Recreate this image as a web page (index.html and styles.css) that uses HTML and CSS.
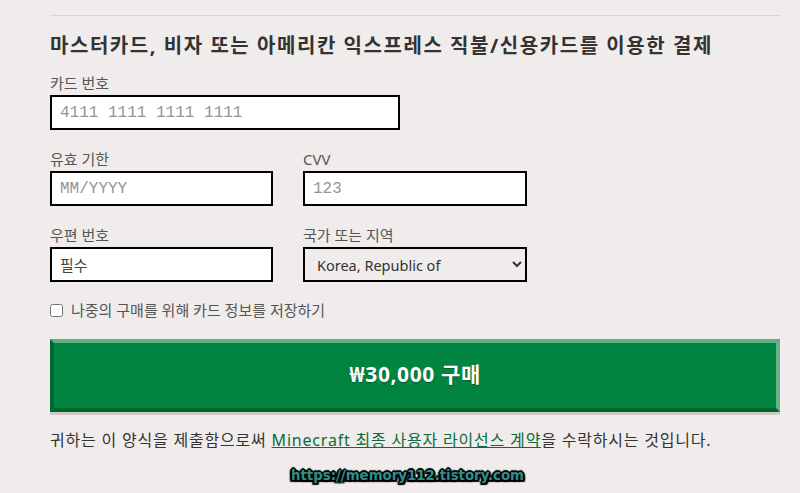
FILE: index.html
```html
<!DOCTYPE html>
<html lang="ko">
<head>
<meta charset="utf-8">
<link rel="stylesheet" href="styles.css">
</head>
<body>
<div class="page">
  <div class="panel">
    <h2 class="title">마스터카드, 비자 또는 아메리칸 익스프레스 직불/신용카드를 이용한 결제</h2>
    <div class="field wide">
      <label class="label">카드 번호</label>
      <input class="input mono" type="text" placeholder="4111 1111 1111 1111">
    </div>
    <div class="row">
      <div class="field">
        <label class="label">유효 기한</label>
        <input class="input mono" type="text" placeholder="MM/YYYY">
      </div>
      <div class="field">
        <label class="label">CVV</label>
        <input class="input mono" type="text" placeholder="123">
      </div>
    </div>
    <div class="row">
      <div class="field">
        <label class="label">우편 번호</label>
        <input class="input dark" type="text" placeholder="필수">
      </div>
      <div class="field">
        <label class="label">국가 또는 지역</label>
        <select class="input select"><option>Korea, Republic of</option></select>
      </div>
    </div>
    <label class="save"><input type="checkbox" class="check"><span>나중의 구매를 위해 카드 정보를 저장하기</span></label>
    <button class="buy">₩30,000 구매</button>
    <p class="terms">귀하는 이 양식을 제출함으로써 <a href="#" class="link">Minecraft 최종 사용자 라이선스 계약</a>을 수락하시는 것입니다.</p>
  </div>
  <div class="watermark">https://memory112.tistory.com</div>
</div>
</body>
</html>
```

FILE: styles.css
```css
* { box-sizing: border-box; }
html, body { margin: 0; padding: 0; }
body {
  background: #f0ecec;
  font-family: "Noto Sans", "Noto Sans CJK KR", sans-serif;
  color: #333;
  width: 800px;
  height: 493px;
  overflow: hidden;
}
.page { position: relative; height: 493px; padding: 15px 20px 0 50px; }
.panel { border-top: 1px solid #d9d4d4; width: 730px; }
.title {
  margin: 16px 0 0;
  font-size: 20px;
  line-height: 28px;
  font-weight: 700;
  color: #333;
  letter-spacing: 1.55px;
}
.field { display: flex; flex-direction: column; }
.wide { width: 350px; margin-top: 14px; }
.row { display: grid; grid-template-columns: 223px 224px; column-gap: 30px; margin-top: 20px; }
.label { font-size: 15px; line-height: 18px; color: #555; margin-bottom: 3px; }
.input {
  height: 35px;
  border: 2px solid #000;
  background: #fff;
  padding: 0 8px;
  font-family: "Noto Sans", "Noto Sans CJK KR", sans-serif;
  font-size: 15px;
  color: #333;
  outline: none;
  border-radius: 0;
}
.mono { font-family: "Liberation Mono", "Courier New", monospace; font-size: 16px; }
.input::placeholder { color: #949494; }
.dark::placeholder { color: #444; }
.select { background: #f0ecec; padding: 0 8px; color: #333; font-size: 14.5px; }
.save {
  display: flex;
  align-items: center;
  margin-top: 18px;
  font-size: 15px;
  line-height: 20px;
  color: #555;
}
.check { margin: 0 8px 0 0; width: 13px; height: 13px; }
.buy {
  display: block;
  width: 730px;
  height: 73px;
  margin-top: 19px;
  background: #00843f;
  border-style: solid;
  border-width: 4px;
  border-color: #5daf82 #63b387 #00662f #00672f;
  box-shadow: 0 3px 0 #cfc9c9;
  color: #fff;
  font-family: "Noto Sans", "Noto Sans CJK KR", sans-serif;
  font-size: 21px;
  line-height: 28px;
  font-weight: 700;
  letter-spacing: 0.6px;
  text-shadow: 0 1px 1px rgba(0,0,0,0.3);
  padding: 0 0 3px;
}
.terms {
  margin: 17px 0 0;
  font-size: 16px;
  line-height: 22px;
  color: #333;
  letter-spacing: 0.8px;
}
.link { color: #0d6b3b; text-decoration: underline; }
.watermark {
  position: absolute;
  left: 0;
  right: 0;
  top: 466px;
  text-align: center;
  padding-left: 15px;
  font-family: "DejaVu Sans Condensed", "DejaVu Sans", sans-serif;
  font-stretch: condensed;
  font-weight: 700;
  font-size: 14.8px;
  color: #2f8f8c;
  text-shadow: -1px -1px 0 #000, 1px -1px 0 #000, -1px 1px 0 #000, 1px 1px 0 #000, 0 2px 1px #000, 2px 0 1px #000, -2px 0 1px #000, 0 -2px 1px #000, 2px 2px 1px #000, -2px 2px 1px #000;
}
```
